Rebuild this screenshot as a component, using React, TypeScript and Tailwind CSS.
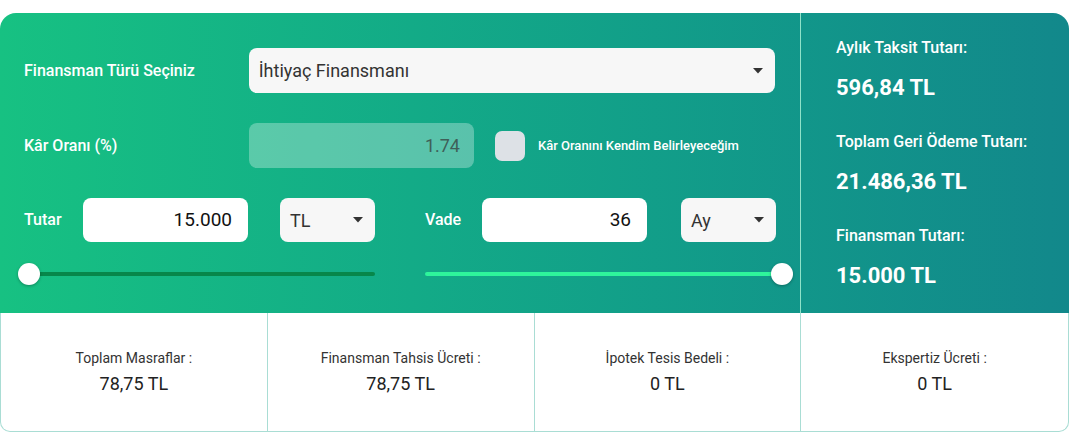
import { useState } from "react";

function Caret() {
  return (
    <svg width="10" height="6" viewBox="0 0 10 6" className="shrink-0">
      <path d="M0 0h10L5 5.5z" fill="#333" />
    </svg>
  );
}

function SelectBox({ value, className }: { value: string; className: string }) {
  return (
    <div
      className={`flex h-[45px] items-center justify-between rounded-[8px] bg-[#f7f7f7] pl-[10px] pr-[12px] text-[18px] text-[#333] ${className}`}
    >
      <span>{value}</span>
      <Caret />
    </div>
  );
}

function Slider({ full, track }: { full: boolean; track: string }) {
  return (
    <div className="relative h-[22px] w-full">
      <div className={`absolute top-[9px] h-[4px] rounded-full ${track} ${full ? "left-0 right-[11px]" : "left-[11px] right-0"}`} />
      <div
        className={`absolute top-0 h-[22px] w-[22px] rounded-full bg-white shadow-[0_1px_3px_rgba(0,0,0,0.3)] ${full ? "right-0" : "left-0"}`}
      />
    </div>
  );
}

const results = [
  { label: "Aylık Taksit Tutarı:", value: "596,84 TL" },
  { label: "Toplam Geri Ödeme Tutarı:", value: "21.486,36 TL" },
  { label: "Finansman Tutarı:", value: "15.000 TL" },
];

const costs = [
  { label: "Toplam Masraflar :", value: "78,75 TL" },
  { label: "Finansman Tahsis Ücreti :", value: "78,75 TL" },
  { label: "İpotek Tesis Bedeli :", value: "0 TL" },
  { label: "Ekspertiz Ücreti :", value: "0 TL" },
];

export default function App() {
  const [custom, setCustom] = useState(false);

  return (
    <div className="min-h-[438px] bg-white font-['Roboto',sans-serif] pt-[13px]">
      <div className="w-[1069px]">
        <div className="flex h-[300px] rounded-t-[16px] bg-gradient-to-r from-[#17c182] to-[#12888b] text-white">
          <div className="w-[801px] border-r border-[#8fe3c9] pl-[24px] pr-[25px] pt-[35px]">
            <div className="flex items-center">
              <div className="w-[225px] text-[16px] font-medium">Finansman Türü Seçiniz</div>
              <SelectBox value="İhtiyaç Finansmanı" className="w-[527px]" />
            </div>

            <div className="mt-[30px] flex items-center">
              <div className="w-[225px] text-[16px] font-medium">Kâr Oranı (%)</div>
              <div className="flex h-[45px] w-[225px] items-center justify-end rounded-[8px] bg-white/30 pr-[14px] text-[18px] text-[#3f5f58]">
                1.74
              </div>
              <button
                onClick={() => setCustom(!custom)}
                className="ml-[21px] h-[30px] w-[30px] rounded-[7px] bg-[#dde1e6]"
              />
              <span className="ml-[13px] text-[13px] font-medium">Kâr Oranını Kendim Belirleyeceğim</span>
            </div>

            <div className="mt-[30px] flex">
              <div className="w-[351px]">
                <div className="flex items-center">
                  <div className="w-[59px] text-[16px] font-medium">Tutar</div>
                  <div className="flex h-[44px] w-[165px] items-center justify-end rounded-[8px] bg-white pr-[16px] text-[19px] text-[#111]">
                    15.000
                  </div>
                  <SelectBox value="TL" className="ml-[32px] !h-[44px] w-[95px]" />
                </div>
                <div className="mt-[21px] -ml-[6px]">
                  <Slider full={false} track="bg-[#07874a]" />
                </div>
              </div>

              <div className="ml-[50px] w-[351px]">
                <div className="flex items-center">
                  <div className="w-[57px] text-[16px] font-medium">Vade</div>
                  <div className="flex h-[44px] w-[165px] items-center justify-end rounded-[8px] bg-white pr-[16px] text-[19px] text-[#111]">
                    36
                  </div>
                  <SelectBox value="Ay" className="ml-[34px] !h-[44px] w-[95px]" />
                </div>
                <div className="mt-[21px] -mr-[17px]">
                  <Slider full={true} track="bg-[#2ef59b]" />
                </div>
              </div>
            </div>
          </div>

          <div className="flex flex-1 flex-col pl-[35px] pt-[26px]">
            {results.map((r, i) => (
              <div key={r.label} className={i > 0 ? "mt-[32px]" : ""}>
                <div className="text-[16px] font-medium leading-[18px]">{r.label}</div>
                <div className="mt-[18px] text-[22px] font-bold leading-[26px]">{r.value}</div>
              </div>
            ))}
          </div>
        </div>

        <div className="grid h-[119px] grid-cols-4 rounded-b-[10px] border-x border-b border-[#a9ddd4]">
          {costs.map((c, i) => (
            <div
              key={c.label}
              className={`flex flex-col items-center justify-center text-[#333] ${i < 3 ? "border-r border-[#a9ddd4]" : ""}`}
            >
              <div className="text-[14px] leading-[17px]">{c.label}</div>
              <div className="mt-[6px] text-[18px] leading-[22px] text-[#222]">{c.value}</div>
            </div>
          ))}
        </div>
      </div>
    </div>
  );
}
